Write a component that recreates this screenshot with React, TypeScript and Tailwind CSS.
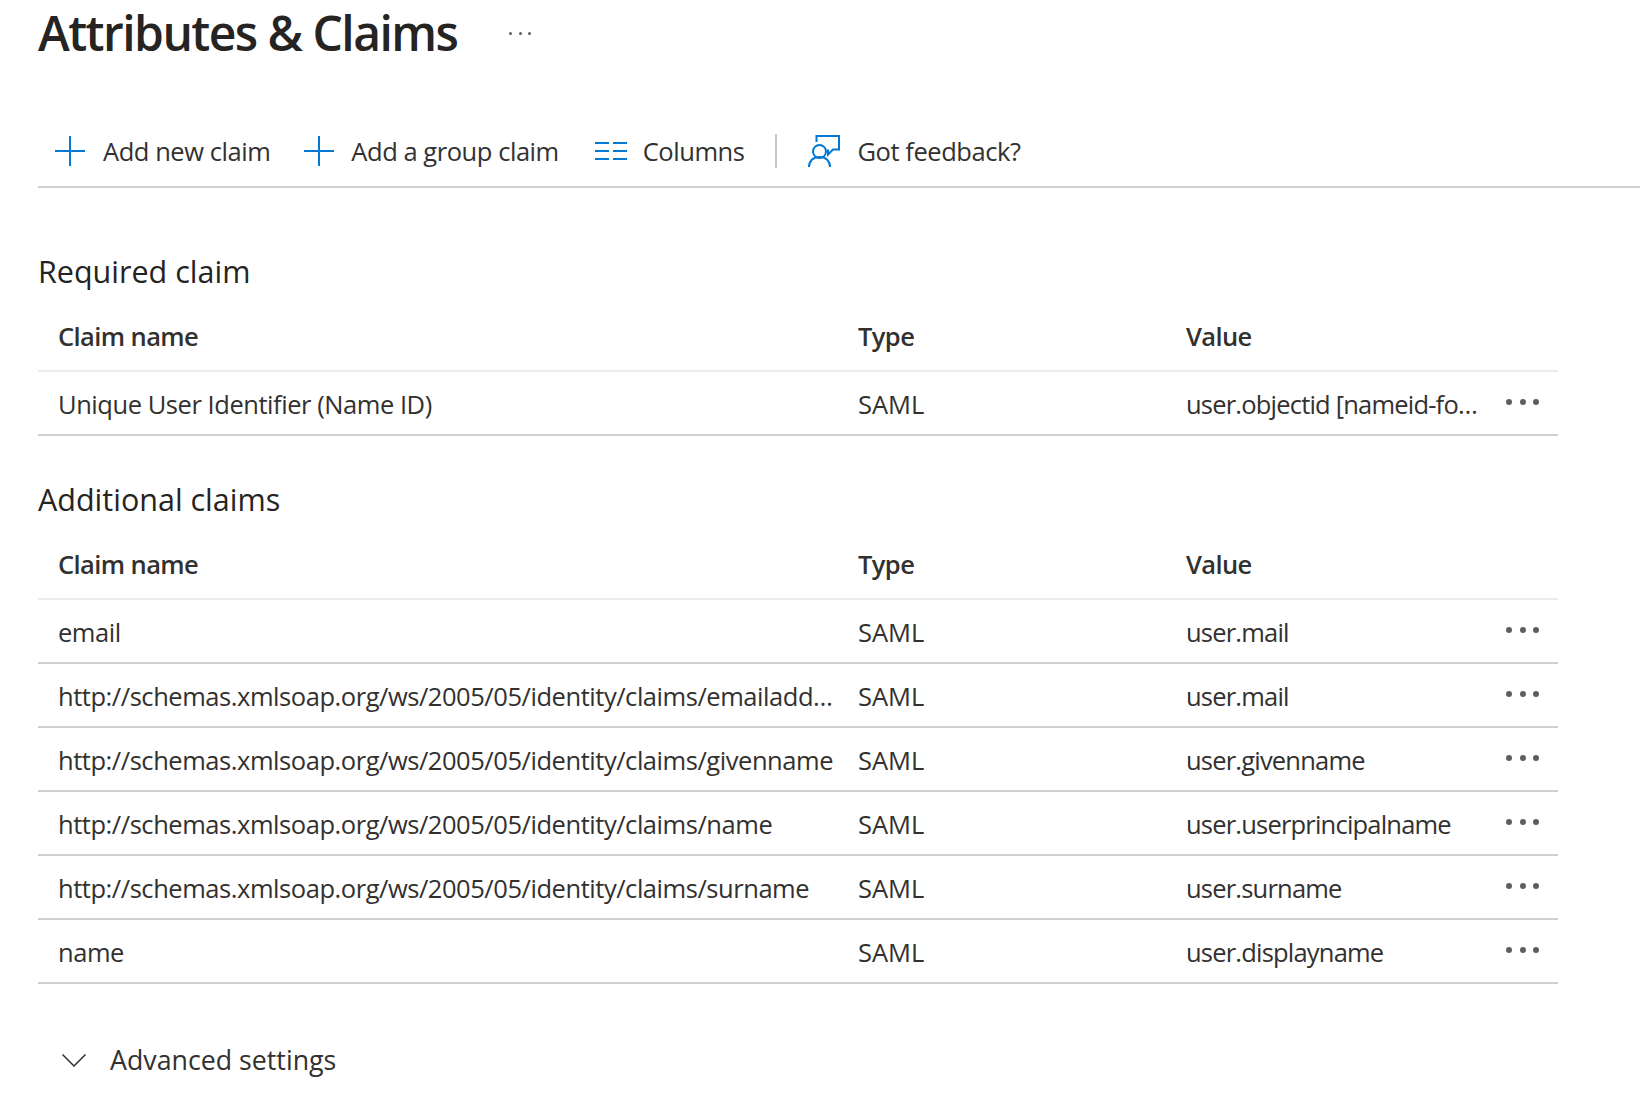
import * as React from "react";

const font = "font-['Open_Sans','Noto_Sans',sans-serif]";

const additionalClaims = [
  ["email", "user.mail"],
  ["http://schemas.xmlsoap.org/ws/2005/05/identity/claims/emailaddress", "user.mail"],
  ["http://schemas.xmlsoap.org/ws/2005/05/identity/claims/givenname", "user.givenname"],
  ["http://schemas.xmlsoap.org/ws/2005/05/identity/claims/name", "user.userprincipalname"],
  ["http://schemas.xmlsoap.org/ws/2005/05/identity/claims/surname", "user.surname"],
  ["name", "user.displayname"],
];

const PlusIcon = () => (
  <svg viewBox="0 0 30 30" className="h-[30px] w-[30px] shrink-0" fill="none" stroke="#0078d4" strokeWidth="2">
    <path d="M15 0v30M0 15h30" />
  </svg>
);

const ColumnsIcon = () => (
  <svg viewBox="0 0 32 18" className="h-[18px] w-8 shrink-0" fill="none" stroke="#0078d4" strokeWidth="2">
    <path d="M0 1h14M18 1h14M0 9h14M18 9h14M0 17h14M18 17h14" />
  </svg>
);

const FeedbackIcon = () => (
  <svg viewBox="0 0 32 32" className="h-8 w-8 shrink-0" fill="none" stroke="#0078d4" strokeWidth="2">
    <path d="M8.500 7V1H31v13.500h-6l-5 5v-5" />
    <circle cx="11.500" cy="16.500" r="6.500" />
    <path d="M1 32c0-6 4-10 10.500-10S22 26 22 32" />
  </svg>
);

const ChevronIcon = () => (
  <svg viewBox="0 0 24 13" className="h-[13px] w-6 shrink-0" fill="none" stroke="#323130" strokeWidth="1.500">
    <path d="M.5.5 12 12 23.500.5" />
  </svg>
);

const Dots = () => (
  <div className="flex w-[33px] shrink-0 -translate-y-[2px] justify-between">
    <span className="h-[6px] w-[6px] rounded-full bg-[#605e5c]" />
    <span className="h-[6px] w-[6px] rounded-full bg-[#605e5c]" />
    <span className="h-[6px] w-[6px] rounded-full bg-[#605e5c]" />
  </div>
);

const ToolbarButton: React.FC<{ icon: React.ReactNode; label: string; className: string }> = ({ icon, label, className }) => (
  <div className={`flex items-center ${className}`}>
    {icon}
    <span>{label}</span>
  </div>
);

const ClaimRow: React.FC<{ name: string; value: string }> = ({ name, value }) => (
  <div className="flex h-16 items-center border-b-2 border-[#d2d0ce] pt-0.5 pl-5">
    <div className="w-[780px] shrink-0 truncate">{name}</div>
    <div className="ml-[20px] w-[328px] shrink-0 tracking-normal">SAML</div>
    <div className="w-[300px] shrink-0 truncate tracking-[-0.8px]">{value}</div>
    <div className="ml-5">
      <Dots />
    </div>
  </div>
);

const ClaimTable: React.FC<{ title: string; rows: string[][]; className: string }> = ({ title, rows, className }) => (
  <section className={className}>
    <h2 className="text-[30.500px] leading-[42px] tracking-normal text-[#252423]">{title}</h2>
    <div className="mt-[26px] flex h-[54px] items-start border-b-2 border-[#edebe9] pl-5 font-semibold tracking-[-0.6px]">
      <div className="w-[800px] shrink-0">Claim name</div>
      <div className="w-[328px] shrink-0">Type</div>
      <div>Value</div>
    </div>
    {rows.map(([name, value]) => (
      <ClaimRow key={name} name={name} value={value} />
    ))}
  </section>
);

export default function App() {
  return (
    <div className={`${font} h-[1118px] w-[1640px] overflow-hidden bg-white text-[25.500px] leading-9 tracking-[-0.45px] text-[#323130]`}>
      <div className="flex h-[66px] items-center pl-[38px]">
        <h1 className="text-[48px] leading-none font-semibold tracking-[-1.55px] text-[#252423]">Attributes &amp; Claims</h1>
        <div className="ml-[52px] flex w-[22px] justify-between">
          <span className="h-[3px] w-[3px] rounded-full bg-[#605e5c]" />
          <span className="h-[3px] w-[3px] rounded-full bg-[#605e5c]" />
          <span className="h-[3px] w-[3px] rounded-full bg-[#605e5c]" />
        </div>
      </div>

      <div className="mt-[54px] ml-[38px] flex h-[68px] items-center border-b-2 border-[#d2d0ce] pb-1 pl-[17px]">
        <ToolbarButton icon={<PlusIcon />} label="Add new claim" className="mr-[34px] gap-[18px]" />
        <ToolbarButton icon={<PlusIcon />} label="Add a group claim" className="mr-[36px] gap-[17px]" />
        <ToolbarButton icon={<ColumnsIcon />} label="Columns" className="gap-[16px]" />
        <div className="mr-[31px] ml-[31px] h-[34px] w-0.5 bg-[#c8c6c4]" />
        <ToolbarButton icon={<FeedbackIcon />} label="Got feedback?" className="gap-[17px]" />
      </div>

      <div className="w-[1558px] pl-[38px]">
        <ClaimTable
          title="Required claim"
          rows={[["Unique User Identifier (Name ID)", "user.objectid [nameid-format:persistent]"]]}
          className="mt-[62px]"
        />
        <ClaimTable title="Additional claims" rows={additionalClaims} className="mt-[42px]" />
      </div>

      <div className="mt-[58px] ml-[62px] flex items-center gap-[24px]">
        <ChevronIcon />
        <span className="text-[26.750px] tracking-normal">Advanced settings</span>
      </div>
    </div>
  );
}
